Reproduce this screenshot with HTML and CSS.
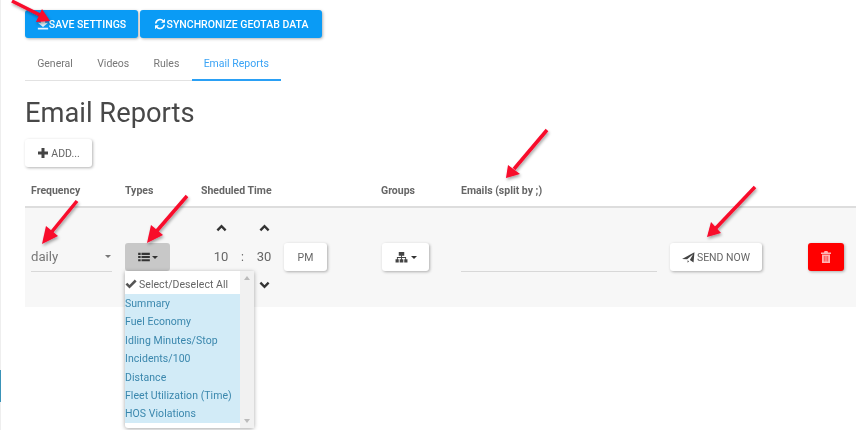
FILE: index.html
```html
<!DOCTYPE html>
<html lang="en">
<head>
<meta charset="utf-8">
<title>Email Reports</title>
<link rel="stylesheet" href="styles.css">
</head>
<body>
<div class="edge"><i class="edge-mark"></i></div>
<main class="page">
  <div class="toolbar">
    <button class="btn primary save"><svg class="ic" viewBox="0 0 14 14"><path fill="#e8f4fd" d="M4.500 1h5v4.500H13L7 10.500 1 5.500h3.500zM1 11.500h12V13.500H1z"/></svg>SAVE SETTINGS</button>
    <button class="btn primary sync"><svg class="ic" viewBox="0 0 14 14"><path fill="none" stroke="#fff" stroke-width="1.800" d="M2 6.500A5 5 0 0 1 10.800 3.600M12 7.500A5 5 0 0 1 3.200 10.400"/><path fill="#fff" d="M12.800 1v4.500H8.300zM1.200 13V8.500h4.500z"/></svg>SYNCHRONIZE GEOTAB DATA</button>
  </div>
  <nav class="tabs">
    <a class="tab">General</a>
    <a class="tab">Videos</a>
    <a class="tab">Rules</a>
    <a class="tab active">Email Reports</a>
  </nav>
  <h1 class="title">Email Reports</h1>
  <button class="btn plain add"><svg class="ic" viewBox="0 0 12 12"><path fill="#444" d="M4.500 1h3v3.500H11v3H7.500V11h-3V7.500H1v-3h3.500z"/></svg>ADD...</button>
  <div class="head">
    <span class="h-freq">Frequency</span>
    <span class="h-types">Types</span>
    <span class="h-time">Sheduled Time</span>
    <span class="h-groups">Groups</span>
    <span class="h-emails">Emails (split by ;)</span>
  </div>
  <section class="row">
    <div class="freq"><span>daily</span><i class="caret"></i></div>
    <div class="types">
      <button class="btn types-btn"><svg class="ic list" viewBox="0 0 14 12"><path fill="#333" d="M0 1h3v2.500H0zM4 1h10v2.500H4zM0 4.800h3v2.500H0zM4 4.800h10v2.500H4zM0 8.600h3v2.500H0zM4 8.600h10v2.500H4z"/></svg><i class="caret dark"></i></button>
      <div class="menu">
        <ul class="options">
          <li class="all"><svg class="check" viewBox="0 0 12 10"><path fill="#555" d="M0.500 5.500L2.300 3.700 4.500 5.900 9.800 0.600 11.600 2.400 4.500 9.500z"/></svg>Select/Deselect All</li>
          <li class="sel">Summary</li>
          <li class="sel">Fuel Economy</li>
          <li class="sel">Idling Minutes/Stop</li>
          <li class="sel">Incidents/100</li>
          <li class="sel">Distance</li>
          <li class="sel">Fleet Utilization (Time)</li>
          <li class="sel">HOS Violations</li>
        </ul>
        <div class="scroll"><i class="up"></i><i class="down"></i></div>
      </div>
    </div>
    <div class="time">
      <div class="spin"><svg class="chev" viewBox="0 0 12 8"><path fill="none" stroke="#333" stroke-width="2.600" d="M1.500 6.500L6 2l4.500 4.500"/></svg><span>10</span></div>
      <span class="colon">:</span>
      <div class="spin"><svg class="chev" viewBox="0 0 12 8"><path fill="none" stroke="#333" stroke-width="2.600" d="M1.500 6.500L6 2l4.500 4.500"/></svg><span>30</span><svg class="chev" viewBox="0 0 12 8"><path fill="none" stroke="#333" stroke-width="2.600" d="M1.500 1.500L6 6l4.500-4.500"/></svg></div>
      <button class="btn plain pm">PM</button>
    </div>
    <button class="btn plain groups"><svg class="ic sitemap" viewBox="0 0 14 12"><path fill="#444" d="M4 0h6v4H7.500v1.500H12V8h1.500v3.500h-3.500V8h1V6.500H7.500V8H9v3.500H5V8h1.500V6.500H3V8h1v3.500H.5V8H2V5.500h4.500V4H4z"/></svg><i class="caret dark"></i></button>
    <div class="email"></div>
    <button class="btn plain send"><svg class="ic" viewBox="0 0 14 12"><path fill="#444" d="M13.500.3L12.500 11.500 8.500 8.800 12 2.500 5.500 8 0 7.500zM6 9L7.600 10 6 11.700z"/></svg>SEND NOW</button>
    <button class="btn del"><svg class="ic" viewBox="0 0 10 12"><path fill="#ffb3b3" d="M3.500 0h3l.5 1.500h3V3H0V1.500h3zM1 3.500h8V12H1z"/><path stroke="#ff5050" d="M3.300 5v5.500M5 5v5.500M6.700 5v5.500"/></svg></button>
  </section>
</main>
<div class="marks">
  <svg class="arrows" viewBox="0 0 856 430" width="856" height="430">
    <defs>
      <filter id="sh" x="-20%" y="-20%" width="140%" height="140%"><feDropShadow dx="1" dy="2" stdDeviation="1.500" flood-color="#000" flood-opacity=".35"/></filter>
    </defs>
    <g filter="url(#sh)" fill="#f8082c" stroke="#f8082c">
      <path stroke-width="3.500" d="M12 1L40 15"/><path stroke="none" d="M50 21L36 22 42 9z"/>
      <path stroke-width="3.500" d="M77 201L50 234"/><path stroke="none" d="M42 244L46 226 58 236z"/>
      <path stroke-width="3.500" d="M187 196L155 233"/><path stroke="none" d="M147 243L151 225 163 235z"/>
      <path stroke-width="3.500" d="M547 130L514 169"/><path stroke="none" d="M506 178L508 165 520 174z"/>
      <path stroke-width="3.500" d="M755 187L715 229"/><path stroke="none" d="M707 237L711 222 721 233z"/>
    </g>
  </svg>
</div>
</body>
</html>
```
FILE: styles.css
```css
* { box-sizing: border-box; }
html, body { margin: 0; padding: 0; height: 430px; overflow: hidden; background: #fff; }
body { font-family: Roboto, "Liberation Sans", sans-serif; color: #555; position: relative; }
.edge { position: absolute; left: 0; top: 0; width: 1px; height: 430px; background: #eee; }
.edge-mark { display: block; margin-top: 370px; height: 32px; background: #3a93b8; }
.page { padding: 10px 0 0 25px; filter: blur(.3px); }
.btn { border: 0; border-radius: 3px; font-family: inherit; display: inline-flex; align-items: center; justify-content: center; padding: 0; box-shadow: 1px 1px 3px rgba(0,0,0,.3); }
.ic { display: block; flex: none; }
.primary { background: #0a9bf5; color: #fff; height: 28px; font-size: 10.500px; font-weight: 500; }
.toolbar { display: flex; gap: 2px; }
.save { width: 113px; }
.save .ic { width: 12px; height: 12px; }
.sync { width: 182px; }
.sync .ic { width: 12px; height: 12px; margin-right: 1px; }
.tabs { display: inline-flex; margin-top: 12px; border-bottom: 1px solid #e2e2e2; height: 31px; font-size: 10.500px; color: #777; }
.tab { padding: 0 12.150px; line-height: 27px; }
.tab.active { color: #3aa3f5; border-bottom: 2px solid #2aa0f5; height: 31px; }
.title { margin: 16px 0 0; font-size: 27.300px; font-weight: 400; line-height: 33px; color: #484848; }
.plain { background: #fff; color: #666; font-size: 10.500px; }
.add { display: flex; width: 67px; height: 28px; margin-top: 9px; gap: 2px; }
.add .ic { width: 12px; height: 12px; }
.head { display: flex; margin-top: 15px; height: 26px; font-size: 10.500px; font-weight: 700; color: #666; line-height: 18px; border-bottom: 2px solid #ddd; padding-left: 6px; }
.h-freq { width: 94px; }
.h-types { width: 76px; }
.h-time { width: 180px; }
.h-groups { width: 80px; }
.row { display: flex; align-items: flex-start; height: 99px; background: #f7f7f7; padding: 35px 0 0 6px; }
.freq { width: 81px; height: 29px; border-bottom: 1px solid #d8d8d8; display: flex; align-items: center; justify-content: space-between; font-size: 13.200px; color: #777; padding: 0 1px 1px 0; }
.caret { display: block; width: 0; height: 0; border: 3.500px solid transparent; border-top-color: #777; border-bottom: 0; }
.caret.dark { border-top-color: #333; }
.types { margin-left: 13px; position: relative; width: 45px; height: 28px; }
.types-btn { width: 45px; height: 28px; background: #c8c8c8; gap: 2px; box-shadow: none; }
.list { width: 12px; height: 10px; }
.menu { position: absolute; z-index: 2; left: 0; top: 28px; width: 129px; height: 157px; background: #fff; display: flex; box-shadow: 0 1px 4px rgba(0,0,0,.35); border-radius: 0 0 3px 3px; }
.options { list-style: none; margin: 0; padding: 0; width: 115px; font-size: 10.500px; height: 152px; letter-spacing: .05px; }
.options li { height: 18.400px; line-height: 18.400px; white-space: nowrap; }
.options .all { color: #666; height: 23px; line-height: 23px; padding-top: 3px; display: flex; align-items: center; gap: 2px; }
.check { width: 12px; height: 10px; }
.options .sel { background: #d2ebf7; color: #3a87ad; padding-top: 1px; }
.scroll { flex: 1; background: #f1f1f1; position: relative; height: 157px; }
.scroll i { position: absolute; left: 4px; width: 0; height: 0; border: 3px solid transparent; }
.scroll .up { top: 5px; border-top: 0; border-bottom: 4px solid #bbb; }
.scroll .down { bottom: 5px; border-bottom: 0; border-top: 4px solid #bbb; }
.time { display: flex; align-items: flex-start; width: 212px; height: 28px; position: relative; font-size: 13px; color: #666; padding-left: 40px; }
.spin { width: 22px; height: 28px; display: flex; flex-direction: column; align-items: center; justify-content: flex-start; position: relative; }
.spin span { line-height: 28px; }
.chev { width: 11px; height: 8px; position: absolute; left: 5.500px; top: -19px; }
.chev + span + .chev { top: 38px; }
.colon { width: 21px; text-align: center; line-height: 28px; font-size: 12px; }
.pm { width: 43px; height: 28px; margin-left: 9px; }
.groups { width: 47px; height: 28px; gap: 3px; }
.sitemap { width: 13px; height: 11px; }
.email { width: 196px; height: 29px; margin-left: 32px; border-bottom: 1px solid #d8d8d8; }
.send { width: 92px; height: 28px; margin-left: 13px; gap: 2px; }
.send .ic { width: 13px; height: 11px; }
.del { width: 36px; height: 28px; margin-left: 46px; background: #f00; }
.del .ic { width: 10px; height: 12px; }
.marks { position: absolute; left: 0; top: 0; z-index: 3; width: 856px; height: 430px; pointer-events: none; }
.arrows { display: block; }
```
